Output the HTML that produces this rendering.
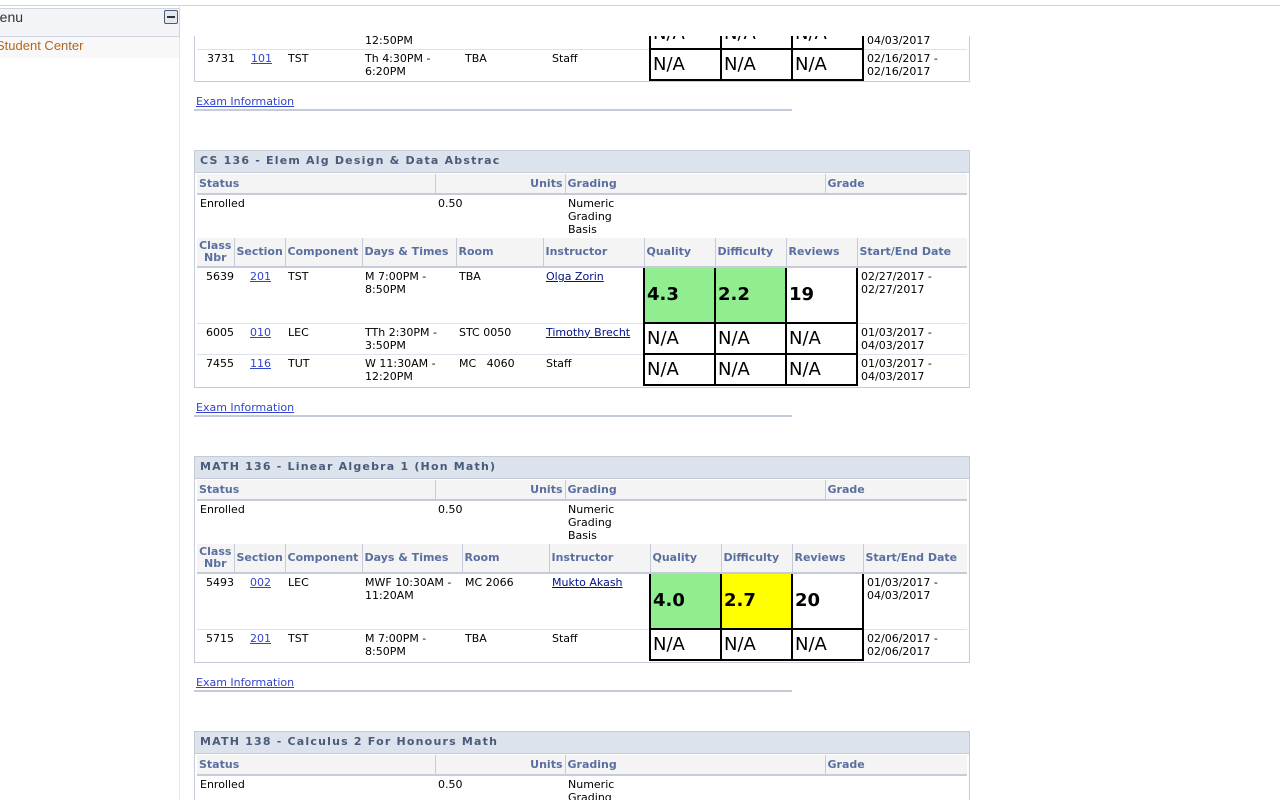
<!DOCTYPE html>
<html><head><meta charset="utf-8"><style>
*{box-sizing:border-box;margin:0;padding:0}
html,body{width:1280px;height:800px;overflow:hidden}
body{background:#fff;font-family:"DejaVu Sans","Liberation Sans",sans-serif;font-size:11px;color:#000;position:relative}
.abs{position:absolute}
a{color:#3344cc;text-decoration:underline}
.box{position:absolute;left:194px;width:776px;border:1px solid #c5cbd8;background:#fff}
.title{height:22px;background:#dce3ed;border-bottom:1px solid #c5cbd8;font-weight:bold;letter-spacing:1.2px;color:#4a5a7a;padding:3px 5px;font-size:11px}
table{border-collapse:collapse;table-layout:fixed;margin-left:2px;width:770px}
th{background:#f4f4f4;color:#5a6fa0;font-weight:bold;text-align:left;vertical-align:middle;padding:0 2px;border-left:1px solid #c5cbd8;border-bottom:2px solid #c5cbd8;font-size:11px;line-height:12px}
th:first-child{border-left:none}
td{vertical-align:top;padding:2px 3px;border-top:1px solid #dde1ea;line-height:13px}
td.r{border:2px solid #000;font-size:18px;padding:2px 2px;vertical-align:middle;line-height:18px}
td.b{font-weight:bold}
td.g{background:#90ee90}
td.y{background:#ffff00}
.exam{position:absolute;left:196px}
.line{position:absolute;left:194px;width:598px;height:2px;background:#c5cbd8}
</style></head><body>
<div class="abs" style="left:0;top:5px;width:1280px;height:1px;background:#d0d4dc"></div>
<div class="abs" style="left:179px;top:6px;width:1px;height:794px;background:#e4e6ea"></div>
<div class="abs" style="left:0;top:8px;width:180px;height:29px;background:#f2f4f7;border:1px solid #d0d4dc;border-left:none"></div>
<div class="abs" style="left:-12px;top:9px;font-family:'Liberation Sans',sans-serif;font-size:14px;color:#333">Menu</div>
<div class="abs" style="left:164px;top:10px;width:14px;height:14px;border:1px solid #4a5a7a;border-radius:2px;background:#e4e8ef"><div style="position:absolute;left:2px;top:5px;width:8px;height:2px;background:#333"></div></div>
<div class="abs" style="left:0;top:37px;width:179px;height:21px;background:#f8f8f8"></div>
<div class="abs" style="left:-4px;top:38px;font-family:'Liberation Sans',sans-serif;font-size:13px;color:#b5651d">Student Center</div>

<!-- top partial -->
<div class="abs" style="left:194px;top:36px;width:776px;height:46px;border:1px solid #c5cbd8;border-top:none;overflow:hidden">
<table style="margin-top:-19px;width:770px">
<colgroup><col width="37"><col width="51"><col width="77"><col width="100"><col width="87"><col width="101"><col width="71"><col width="71"><col width="71"><col width="104"></colgroup>
<tr style="height:30px"><td></td><td></td><td></td><td>11:30AM -<br>12:50PM</td><td></td><td></td><td class="r">N/A</td><td class="r">N/A</td><td class="r">N/A</td><td>01/03/2017 -<br>04/03/2017</td></tr>
<tr style="height:31px"><td style="padding-left:10px">3731</td><td style="padding-left:17px"><a>101</a></td><td>TST</td><td>Th 4:30PM -<br>6:20PM</td><td>TBA</td><td>Staff</td><td class="r">N/A</td><td class="r">N/A</td><td class="r">N/A</td><td>02/16/2017 -<br>02/16/2017</td></tr>
</table></div>
<div class="exam" style="top:95px"><a>Exam Information</a></div>
<div class="line" style="top:109px"></div>

<!-- CS 136 -->
<div class="box" style="top:150px;height:238px">
<div class="title">CS 136 - Elem Alg Design &amp; Data Abstrac</div>
<table style="margin-top:1px">
<colgroup><col width="238"><col width="130"><col width="260"><col width="142"></colgroup>
<tr style="height:20px"><th>Status</th><th style="text-align:right">Units</th><th>Grading</th><th>Grade</th></tr>
<tr style="height:44px"><td style="border:none">Enrolled</td><td style="border:none">0.50</td><td style="border:none">Numeric<br>Grading<br>Basis</td><td style="border:none"></td></tr>
</table>
<table>
<colgroup><col width="37"><col width="51"><col width="77"><col width="94"><col width="87"><col width="101"><col width="71"><col width="71"><col width="71"><col width="110"></colgroup>
<tr style="height:29px"><th style="text-align:center">Class<br>Nbr</th><th>Section</th><th>Component</th><th>Days &amp; Times</th><th>Room</th><th>Instructor</th><th>Quality</th><th>Difficulty</th><th>Reviews</th><th>Start/End Date</th></tr>
<tr style="height:56px"><td style="padding-left:9px">5639</td><td style="padding-left:16px"><a>201</a></td><td>TST</td><td>M 7:00PM -<br>8:50PM</td><td>TBA</td><td><a style="color:#001188">Olga Zorin</a></td><td class="r b g">4.3</td><td class="r b g">2.2</td><td class="r b">19</td><td>02/27/2017 -<br>02/27/2017</td></tr>
<tr style="height:31px"><td style="padding-left:9px">6005</td><td style="padding-left:16px"><a>010</a></td><td>LEC</td><td>TTh 2:30PM -<br>3:50PM</td><td>STC 0050</td><td style="white-space:nowrap;overflow:hidden"><a style="color:#001188">Timothy Brecht</a></td><td class="r">N/A</td><td class="r">N/A</td><td class="r">N/A</td><td>01/03/2017 -<br>04/03/2017</td></tr>
<tr style="height:31px"><td style="padding-left:9px">7455</td><td style="padding-left:16px"><a>116</a></td><td>TUT</td><td>W 11:30AM -<br>12:20PM</td><td>MC&nbsp;&nbsp;&nbsp;4060</td><td>Staff</td><td class="r">N/A</td><td class="r">N/A</td><td class="r">N/A</td><td>01/03/2017 -<br>04/03/2017</td></tr>
</table></div>
<div class="exam" style="top:401px"><a>Exam Information</a></div>
<div class="line" style="top:415px"></div>

<!-- MATH 136 -->
<div class="box" style="top:456px;height:207px">
<div class="title">MATH 136 - Linear Algebra 1 (Hon Math)</div>
<table style="margin-top:1px">
<colgroup><col width="238"><col width="130"><col width="260"><col width="142"></colgroup>
<tr style="height:20px"><th>Status</th><th style="text-align:right">Units</th><th>Grading</th><th>Grade</th></tr>
<tr style="height:44px"><td style="border:none">Enrolled</td><td style="border:none">0.50</td><td style="border:none">Numeric<br>Grading<br>Basis</td><td style="border:none"></td></tr>
</table>
<table>
<colgroup><col width="37"><col width="51"><col width="77"><col width="100"><col width="87"><col width="101"><col width="71"><col width="71"><col width="71"><col width="104"></colgroup>
<tr style="height:29px"><th style="text-align:center">Class<br>Nbr</th><th>Section</th><th>Component</th><th>Days &amp; Times</th><th>Room</th><th>Instructor</th><th>Quality</th><th>Difficulty</th><th>Reviews</th><th>Start/End Date</th></tr>
<tr style="height:56px"><td style="padding-left:9px">5493</td><td style="padding-left:16px"><a>002</a></td><td>LEC</td><td>MWF 10:30AM -<br>11:20AM</td><td>MC 2066</td><td><a style="color:#001188">Mukto Akash</a></td><td class="r b g">4.0</td><td class="r b y">2.7</td><td class="r b">20</td><td>01/03/2017 -<br>04/03/2017</td></tr>
<tr style="height:31px"><td style="padding-left:9px">5715</td><td style="padding-left:16px"><a>201</a></td><td>TST</td><td>M 7:00PM -<br>8:50PM</td><td>TBA</td><td>Staff</td><td class="r">N/A</td><td class="r">N/A</td><td class="r">N/A</td><td>02/06/2017 -<br>02/06/2017</td></tr>
</table></div>
<div class="exam" style="top:676px"><a>Exam Information</a></div>
<div class="line" style="top:690px"></div>

<!-- MATH 138 -->
<div class="box" style="top:731px;height:100px">
<div class="title">MATH 138 - Calculus 2 For Honours Math</div>
<table style="margin-top:1px">
<colgroup><col width="238"><col width="130"><col width="260"><col width="142"></colgroup>
<tr style="height:20px"><th>Status</th><th style="text-align:right">Units</th><th>Grading</th><th>Grade</th></tr>
<tr style="height:44px"><td style="border:none">Enrolled</td><td style="border:none">0.50</td><td style="border:none">Numeric<br>Grading<br>Basis</td><td style="border:none"></td></tr>
</table></div>
</body></html>
